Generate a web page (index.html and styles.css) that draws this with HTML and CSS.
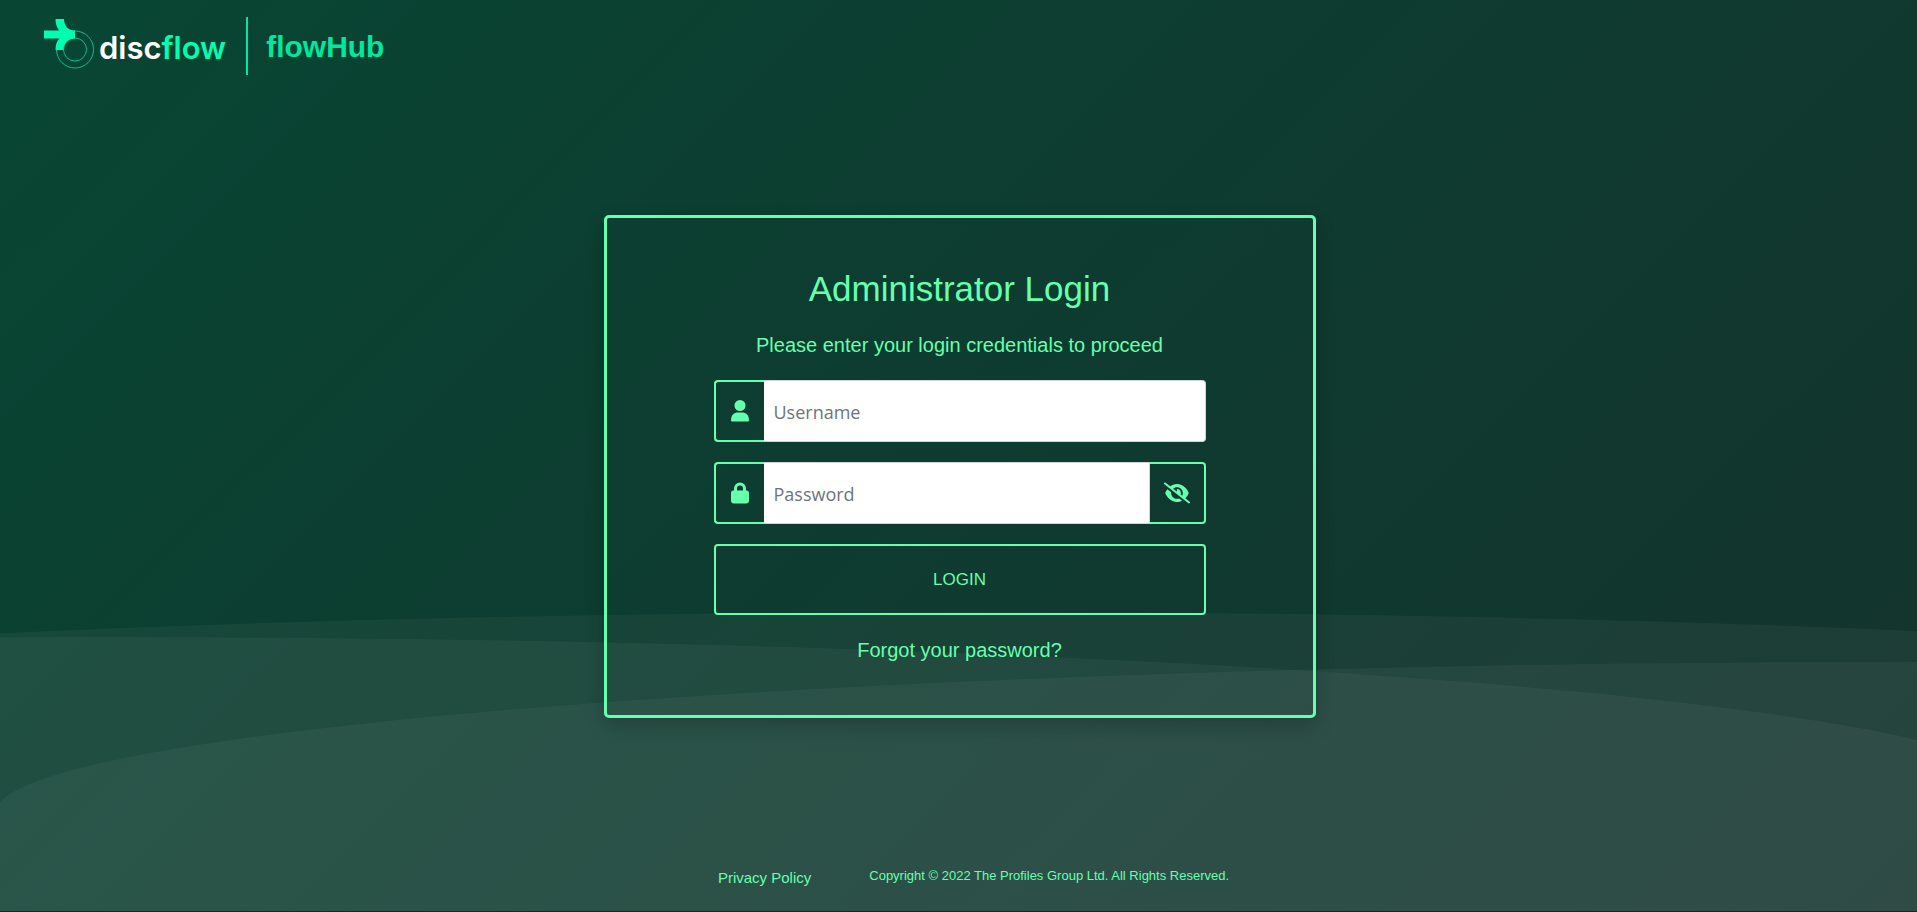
FILE: index.html
```
<!DOCTYPE html>
<html lang="en">
<head>
  <meta charset="utf-8">
  <meta name="viewport" content="width=device-width, initial-scale=1">
  <title>discflow flowHub - Administrator Login</title>
  <link rel="stylesheet" href="styles.css">
</head>
<body>
  <div class="page">
    <svg class="waves" viewBox="0 0 1917 300" preserveAspectRatio="none" aria-hidden="true">
      <path d="M-933 151A1917 150 0 0 1 2901 151V300H-933Z"/>
      <path d="M-1820 176A1917 150 0 0 1 2014 176V300H-1820Z"/>
      <path d="M-4 201A1917 150 0 0 1 3830 201V300H-4Z"/>
    </svg>

    <header class="header">
      <a class="brand" href="#" aria-label="discflow">
        <svg class="brand-mark" viewBox="0 0 50 50" aria-hidden="true">
          <circle class="ring" cx="31" cy="30.500" r="18.500"/>
          <circle class="ring" cx="31" cy="30.500" r="11.500"/>
          <path d="M11.500 0H20C20 6 23.500 11.500 31 11.500V19.500C24 19.500 19.500 24 19.500 31H11.500C11.500 26 12.500 22.500 15.500 19.500H0V11.500H15C12.500 8 11.500 4 11.500 0Z"/>
        </svg>
        <span class="brand-name">disc<span class="brand-accent">flow</span></span>
      </a>
      <span class="product">flowHub</span>
    </header>

    <main class="main">
      <form class="card">
        <h1 class="title">Administrator Login</h1>
        <p class="subtitle">Please enter your login credentials to proceed</p>

        <div class="field">
          <label class="addon" for="username" aria-label="Username">
            <svg class="icon" viewBox="0 0 20 22" aria-hidden="true">
              <circle cx="10" cy="5.500" r="5.500"/>
              <path d="M1 20.500C1 15 4 12.500 8 12.500H12C16 12.500 19 15 19 20.500Q19 21.500 18 21.500H2Q1 21.500 1 20.500Z"/>
            </svg>
          </label>
          <input class="input" id="username" type="text" placeholder="Username">
        </div>

        <div class="field">
          <label class="addon" for="password" aria-label="Password">
            <svg class="icon" viewBox="0 0 20 22" aria-hidden="true">
              <path fill-rule="evenodd" d="M4 8.500V6.500A6 6 0 0 1 16 6.500V8.500H16.500Q19 8.500 19 11V18.500Q19 21.500 16 21.500H4Q1 21.500 1 18.500V11Q1 8.500 3.500 8.500ZM7 8.500H13V6.500A3 3 0 0 0 7 6.500Z"/>
            </svg>
          </label>
          <input class="input" id="password" type="password" placeholder="Password">
          <button class="addon toggle" type="button" aria-label="Show password">
            <svg class="icon icon-eye" viewBox="0 0 640 512" aria-hidden="true">
              <path d="M38.800 5.100C28.400-3.100 13.300-1.200 5.100 9.200S-1.200 34.700 9.200 42.900l592 464c10.400 8.200 25.500 6.300 33.700-4.100s6.300-25.500-4.100-33.700L525.600 386.700c39.600-40.600 66.400-86.100 79.900-118.400 3.300-7.900 3.300-16.700 0-24.600-14.900-35.700-46.200-87.700-93-131.100C465.500 68.800 400.800 32 320 32c-68.200 0-125 26.300-169.300 60.800L38.800 5.100zM223.100 149.500C248.600 126.200 282.700 112 320 112c79.500 0 144 64.500 144 144 0 24.900-6.300 48.300-17.400 68.700L408 294.500c8.400-19.300 10.600-41.400 4.800-63.300-11.100-41.500-47.800-69.400-88.600-71.100-5.800-.200-9.200 6.100-7.400 11.700 2.100 6.400 3.300 13.200 3.300 20.300 0 10.200-2.400 19.800-6.600 28.300l-90.300-70.800zM373 389.900c-16.400 6.500-34.300 10.100-53 10.100-79.500 0-144-64.500-144-144 0-6.900.500-13.600 1.400-20.200L83.100 161.500C60.300 191.200 44 220.800 34.500 243.700c-3.300 7.900-3.300 16.700 0 24.600 14.900 35.700 46.200 87.700 93 131.100C174.500 443.200 239.200 480 320 480c47.800 0 89.900-12.900 126.200-32.500L373 389.900z"/>
            </svg>
          </button>
        </div>

        <button class="login" type="submit">LOGIN</button>
        <a class="forgot" href="#">Forgot your password?</a>
      </form>
    </main>

    <footer class="footer">
      <a class="privacy" href="#">Privacy Policy</a>
      <span class="copyright">Copyright © 2022 The Profiles Group Ltd. All Rights Reserved.</span>
    </footer>
  </div>
</body>
</html>
```
FILE: styles.css
```
:root {
  --mint: #66ffad;
  --brand: #00ffb0;
  --product: #00e89d;
}

* {
  box-sizing: border-box;
}

body {
  margin: 0;
  font-family: "Liberation Sans", Arial, sans-serif;
  color: var(--mint);
  background: #1c2236;
}

a {
  color: inherit;
  text-decoration: none;
}

.page {
  position: relative;
  display: flex;
  flex-direction: column;
  min-height: calc(100vh - 1px);
  overflow: hidden;
  background: linear-gradient(135deg, #084633 0%, #0e3c30 45%, #14332d 100%);
}

.waves {
  position: absolute;
  left: 0;
  bottom: 0;
  width: 100%;
  height: 300px;
  fill: rgba(255, 255, 255, 0.045);
}

.header,
.main,
.footer {
  position: relative;
}

.header {
  display: flex;
  align-items: center;
  padding: 17px 44px 0;
}

.brand {
  display: flex;
  align-items: center;
  gap: 5px;
  height: 58px;
  padding: 0 20px 4px 0;
  border-right: 2px solid var(--product);
}

.brand-mark {
  width: 50px;
  height: 50px;
  fill: var(--brand);
}

.ring {
  fill: none;
  stroke: #00c488;
  stroke-width: 1;
}

.brand-name {
  padding-top: 8px;
  font: 600 31px/40px Inter, sans-serif;
  color: #fff;
}

.brand-accent {
  color: var(--brand);
}

.product {
  padding: 2px 0 0 18px;
  font-size: 30px;
  font-weight: 700;
  line-height: 40px;
  color: var(--product);
}

.main {
  flex: 1;
  display: flex;
  justify-content: center;
  align-items: flex-start;
  padding: 140px 14px 32px 16px;
}

.card {
  display: flex;
  flex-direction: column;
  width: 100%;
  max-width: 712px;
  padding: 49px 107px 50px;
  border: 3px solid var(--mint);
  border-radius: 5px;
  box-shadow: 0 8px 20px rgba(0, 0, 0, 0.2);
}

.title {
  margin: 0 0 19px;
  font-size: 35px;
  font-weight: 400;
  line-height: 44px;
  text-align: center;
}

.subtitle {
  margin: 0 0 20px;
  font-size: 20px;
  line-height: 30px;
  text-align: center;
}

.field {
  display: flex;
  height: 62px;
  margin-bottom: 20px;
}

.addon {
  display: flex;
  align-items: center;
  justify-content: center;
  flex: none;
  width: 50px;
  padding: 0;
  border: 2px solid var(--mint);
  border-right: 0;
  border-radius: 4px 0 0 4px;
  background: none;
}

.toggle {
  width: 56px;
  border-right: 2px solid var(--mint);
  border-left: 0;
  border-radius: 0 4px 4px 0;
  cursor: pointer;
}

.icon {
  width: 20px;
  height: 22px;
  fill: var(--mint);
}

.icon-eye {
  width: 26px;
}

.input {
  flex: 1;
  min-width: 0;
  padding: 2px 10px 0;
  border: 1px solid #ced4da;
  border-left: 0;
  border-radius: 0;
  background: #fff;
  color: #212529;
  font: 18px/30px "Open Sans", sans-serif;
}

.input:last-child {
  border-radius: 0 4px 4px 0;
}

.input::placeholder {
  color: #6c757d;
  opacity: 1;
}

.login {
  height: 71px;
  border: 2px solid var(--mint);
  border-radius: 4px;
  background: none;
  color: var(--mint);
  font: 17px/28px "Liberation Sans", Arial, sans-serif;
  cursor: pointer;
}

.forgot {
  align-self: center;
  margin-top: 20px;
  font-size: 20px;
  line-height: 30px;
}

.footer {
  display: flex;
  justify-content: center;
  gap: 58px;
  padding: 0 16px 21px 46px;
}

.privacy {
  padding-top: 2px;
  font-size: 15px;
  line-height: 24px;
}

.copyright {
  font-size: 13px;
  line-height: 24px;
}
```
